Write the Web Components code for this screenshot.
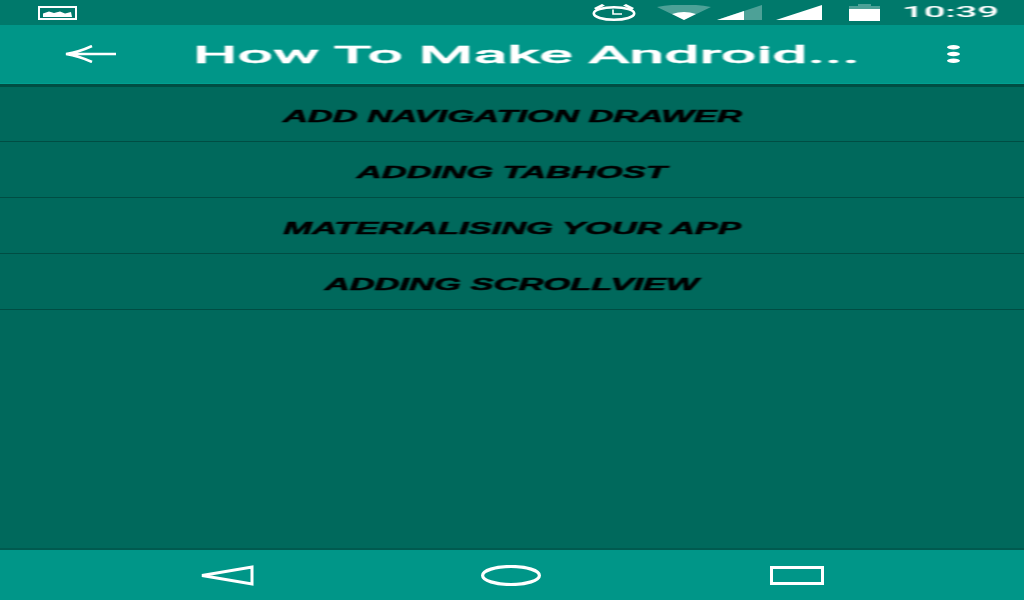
<!DOCTYPE html>
<html>
<head>
<meta charset="utf-8">
<title>How To Make Android</title>
<style>
  html, body { margin: 0; height: 100%; overflow: hidden; background: #00695c; }
  body { display: flex; flex-direction: column; font-family: Roboto, "Liberation Sans", sans-serif; }
  lesson-list { flex: 1; }
</style>
</head>
<body>
<status-bar time="10:39"></status-bar>
<app-bar title="How To Make Android..."></app-bar>
<lesson-list>
  <lesson-row>ADD NAVIGATION DRAWER</lesson-row>
  <lesson-row>ADDING TABHOST</lesson-row>
  <lesson-row>MATERIALISING YOUR APP</lesson-row>
  <lesson-row>ADDING SCROLLVIEW</lesson-row>
</lesson-list>
<nav-bar></nav-bar>

<script>
class StatusBar extends HTMLElement {
  constructor() {
    super();
    const shadow = this.attachShadow({ mode: 'open' });
    shadow.innerHTML = `
      <style>
        :host {
          display: flex;
          align-items: center;
          height: 25px;
          padding: 0 28px 0 38px;
          background: #00796b;
          color: #fff;
        }
        svg { display: block; filter: blur(.4px); }
        .right { margin-left: auto; display: flex; align-items: center; }
        .alarm { margin-right: 21px; }
        .wifi { margin-right: 6px; }
        .sig { margin-right: 14px; }
        .sig2 { margin-right: 27px; }
        .batt { margin-right: 22px; }
        .time-box { width: 94px; }
        .time {
          display: block;
          width: 36px;
          font-size: 15px;
          line-height: 25px;
          font-weight: 500;
          white-space: nowrap;
          filter: blur(.4px);
          transform: scaleX(2.55);
          transform-origin: left center;
        }
      </style>
      <svg width="39" height="14" viewBox="0 0 39 14">
        <rect x="1" y="1" width="37" height="12" fill="none" stroke="#fff" stroke-width="2"/>
        <path d="M5 11 L5 7.5 L11 5.5 L16 7 L22 5.5 L27 7.5 L33 6 L34 11 Z" fill="#fff"/>
      </svg>
      <div class="right">
        <svg class="alarm" width="44" height="17" viewBox="0 0 44 17">
          <ellipse cx="22" cy="9.5" rx="20.2" ry="6.2" fill="none" stroke="#fff" stroke-width="2.6"/>
          <path d="M21 5.5 V10 H30" fill="none" stroke="#fff" stroke-width="1.6"/>
          <path d="M2 4 L10 0 L13 1.5 L4 6 Z M42 4 L34 0 L31 1.5 L40 6 Z" fill="#fff"/>
        </svg>
        <svg class="wifi" width="54" height="16" viewBox="0 0 54 16">
          <path d="M0 2 Q27 -3 54 2 L27 15 Z" fill="#fff" fill-opacity=".3"/>
          <path d="M15 9 Q27 5 39 9 L27 15 Z" fill="#fff"/>
        </svg>
        <svg class="sig" width="45" height="16" viewBox="0 0 45 16">
          <path d="M0 15 L45 0 V15 Z" fill="#fff" fill-opacity=".3"/>
          <path d="M0 15 L27 6 V15 Z" fill="#fff"/>
        </svg>
        <svg class="sig2" width="46" height="16" viewBox="0 0 46 16">
          <path d="M0 15 L46 0 V15 Z" fill="#fff"/>
        </svg>
        <svg class="batt" width="31" height="17" viewBox="0 0 31 17">
          <path d="M9 0 H22 V2 H9 Z" fill="#fff" fill-opacity=".3"/>
          <path d="M0 2 H31 V5 H0 Z" fill="#fff" fill-opacity=".3"/>
          <path d="M0 5 H31 V17 H0 Z" fill="#fff"/>
        </svg>
        <div class="time-box"><span class="time"></span></div>
      </div>
    `;
    shadow.querySelector('.time').textContent = this.getAttribute('time');
  }
}

class AppBar extends HTMLElement {
  constructor() {
    super();
    const shadow = this.attachShadow({ mode: 'open' });
    shadow.innerHTML = `
      <style>
        :host {
          position: relative;
          display: flex;
          align-items: center;
          box-sizing: border-box;
          height: 59px;
          padding: 0 64px 0 65px;
          background: #009688;
          border-bottom: 1px solid #00a091;
          color: #fff;
        }
        /* shadow under the bar, lies over the list */
        :host::after {
          content: "";
          position: absolute;
          left: 0;
          right: 0;
          top: 59px;
          height: 3px;
          background: #004d43;
        }
        svg { display: block; flex: none; filter: blur(.4px); }
        .title {
          margin-left: 77px;
          margin-right: auto;
          padding-top: 2px;
          font-size: 24px;
          line-height: 57px;
          font-weight: 500;
          white-space: nowrap;
          -webkit-text-stroke: .3px #fff;
          filter: blur(.4px);
          transform: scaleX(2.61);
          transform-origin: left center;
        }
      </style>
      <svg width="51" height="18" viewBox="0 0 51 18">
        <path d="M51 9 H1 M27 1 Q14 7 1 9 Q14 11 27 17" fill="none" stroke="#fff" stroke-width="2.6"/>
      </svg>
      <span class="title"></span>
      <svg width="13" height="18" viewBox="0 0 13 18">
        <ellipse cx="6.5" cy="2.2" rx="6.5" ry="2.2" fill="#fff"/>
        <ellipse cx="6.5" cy="9" rx="6.5" ry="2.2" fill="#fff"/>
        <ellipse cx="6.5" cy="15.8" rx="6.5" ry="2.2" fill="#fff"/>
      </svg>
    `;
    shadow.querySelector('.title').textContent = this.getAttribute('title');
  }
}

class LessonList extends HTMLElement {
  constructor() {
    super();
    const shadow = this.attachShadow({ mode: 'open' });
    shadow.innerHTML = `
      <style>
        :host {
          display: block;
          background: #00695c;
          border-bottom: 1px solid #005a4f;
        }
        .wrap { padding-top: 2px; }
      </style>
      <div class="wrap"><slot></slot></div>
    `;
  }
}

class LessonRow extends HTMLElement {
  constructor() {
    super();
    const shadow = this.attachShadow({ mode: 'open' });
    shadow.innerHTML = `
      <style>
        :host {
          display: flex;
          align-items: center;
          justify-content: center;
          box-sizing: border-box;
          height: 56px;
          padding-top: 6px;
          border-bottom: 1px solid #004d43;
          color: #000;
        }
        span {
          display: inline-block;
          font-family: "Liberation Sans", Arial, sans-serif;
          font-size: 16px;
          font-weight: bold;
          font-style: italic;
          white-space: nowrap;
          -webkit-text-stroke: .5px #000;
          filter: blur(.4px);
          transform: scaleX(2.157);
        }
      </style>
      <span><slot></slot></span>
    `;
  }
}

class NavBar extends HTMLElement {
  constructor() {
    super();
    const shadow = this.attachShadow({ mode: 'open' });
    shadow.innerHTML = `
      <style>
        :host {
          display: grid;
          grid-template-columns: 54px 227px 60px 229px 54px;
          align-items: center;
          box-sizing: border-box;
          height: 51px;
          padding: 0 200px 0 200px;
          background: #009688;
          border-top: 1px solid #005a4f;
        }
        svg { display: block; filter: blur(.4px); }
        .home { grid-column: 3; }
        .recent { grid-column: 5; }
      </style>
      <svg width="54" height="21" viewBox="0 0 54 21">
        <path d="M2 10.5 L52 2 V19 Z" fill="none" stroke="#fff" stroke-width="3"/>
      </svg>
      <svg class="home" width="60" height="21" viewBox="0 0 60 21">
        <ellipse cx="30" cy="10.5" rx="28.4" ry="9" fill="none" stroke="#fff" stroke-width="3.2"/>
      </svg>
      <svg class="recent" width="54" height="19" viewBox="0 0 54 19">
        <rect x="1.5" y="1.5" width="51" height="16" fill="none" stroke="#fff" stroke-width="3"/>
      </svg>
    `;
  }
}

customElements.define('status-bar', StatusBar);
customElements.define('app-bar', AppBar);
customElements.define('lesson-list', LessonList);
customElements.define('lesson-row', LessonRow);
customElements.define('nav-bar', NavBar);
</script>
</body>
</html>
